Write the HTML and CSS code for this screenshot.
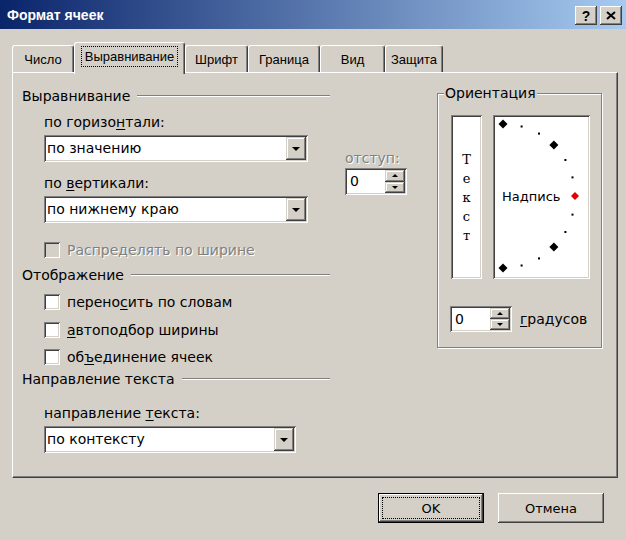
FILE: index.html
```html
<!DOCTYPE html>
<html lang="ru">
<head>
<meta charset="utf-8">
<title>Формат ячеек</title>
<link rel="stylesheet" href="styles.css">
</head>
<body>
<div class="win">
  <div class="title">
    <span class="title-text">Формат ячеек</span>
    <div class="tbtns">
      <span class="tbtn">?</span>
      <span class="tbtn"><svg width="10" height="9" viewBox="0 0 10 9"><path d="M1 1 L9 8 M9 1 L1 8" stroke="#000" stroke-width="2"/></svg></span>
    </div>
  </div>

  <div class="tabs">
    <div class="tab t1">Число</div>
    <div class="tab active t2"><span class="focus">Выравнивание</span></div>
    <div class="tab t3">Шрифт</div>
    <div class="tab t4">Граница</div>
    <div class="tab t5">Вид</div>
    <div class="tab t6">Защита</div>
  </div>

  <div class="panel">
    <div class="left">
      <div class="hdr"><span>Выравнивание</span><span class="rule"></span></div>
      <div class="indent">
        <div class="lbl m10">по горизо<u>н</u>тали:</div>
        <div class="combo m5"><span class="cval">по значению</span><span class="cbtn"><span class="down"></span></span></div>
        <div class="lbl m13">по <u>в</u>ертикали:</div>
        <div class="combo m5"><span class="cval">по нижнему краю</span><span class="cbtn"><span class="down"></span></span></div>
        <div class="chk dis m19"><span class="box"></span><span>Распределять по ширине</span></div>
      </div>
      <div class="hdr m9"><span>Отображение</span><span class="rule"></span></div>
      <div class="indent">
        <div class="chk m11"><span class="box"></span><span>перено<u>с</u>ить по словам</span></div>
        <div class="chk m12"><span class="box"></span><span><u>а</u>втоподбор ширины</span></div>
        <div class="chk m11"><span class="box"></span><span>об<u>ъ</u>единение ячеек</span></div>
      </div>
      <div class="hdr m6"><span>Направление текста</span><span class="rule"></span></div>
      <div class="indent">
        <div class="lbl m18">направление <u>т</u>екста:</div>
        <div class="combo short m5"><span class="cval">по контексту</span><span class="cbtn"><span class="down"></span></span></div>
      </div>
    </div>

    <div class="mid">
      <div class="lbl distext">отступ:</div>
      <div class="spin"><span class="sval">0</span><span class="sbtns"><span class="sbtn"><span class="up"></span></span><span class="sbtn"><span class="down small"></span></span></span></div>
    </div>

    <fieldset class="orient">
      <legend>Ориентация</legend>
      <div class="orow">
        <div class="vbox"><span>Т</span><span>е</span><span>к</span><span>с</span><span>т</span></div>
        <div class="dial">
          <svg width="93" height="160" viewBox="0 0 93 160">
            <g fill="#000">
              <polygon points="8,2.5 12.5,7 8,11.5 3.5,7"/>
              <polygon points="58.9,23.6 63.4,28.1 58.9,32.6 54.4,28.1"/>
              <polygon points="58.9,125.4 63.4,129.9 58.9,134.4 54.4,129.9"/>
              <polygon points="8,146.5 12.5,151 8,155.5 3.5,151"/>
              <rect x="25.6" y="8.5" width="2" height="2"/>
              <rect x="43" y="15.6" width="2" height="2"/>
              <rect x="69.4" y="42" width="2" height="2"/>
              <rect x="76.5" y="59.4" width="2" height="2"/>
              <rect x="76.5" y="96.6" width="2" height="2"/>
              <rect x="69.4" y="114" width="2" height="2"/>
              <rect x="43" y="140.4" width="2" height="2"/>
              <rect x="25.6" y="147.5" width="2" height="2"/>
            </g>
            <polygon points="80,75 84,79 80,83 76,79" fill="#e00000"/>
            <text x="7" y="84" class="dialtext">Надпись</text>
          </svg>
        </div>
      </div>
      <div class="srow">
        <div class="spin"><span class="sval">0</span><span class="sbtns"><span class="sbtn"><span class="up"></span></span><span class="sbtn"><span class="down small"></span></span></span></div>
        <span><u>г</u>радусов</span>
      </div>
    </fieldset>
  </div>

  <div class="btns">
    <div class="btn def"><span class="bfocus">OK</span></div>
    <div class="btn"><span class="bfocus nofocus">Отмена</span></div>
  </div>
</div>
</body>
</html>
```

FILE: styles.css
```css
* { box-sizing: border-box; }
html, body { margin: 0; padding: 0; }
body {
  width: 626px;
  height: 540px;
  overflow: hidden;
  font-family: "DejaVu Sans", "Liberation Sans", Arial, sans-serif;
  font-size: 14px;
  color: #000;
  background: #d4d0c8;
}
u { text-decoration: underline; text-underline-offset: 2px; }

.win {
  width: 626px;
  height: 540px;
  background: #d4d0c8;
  display: flex;
  flex-direction: column;
}

/* title bar */
.title {
  height: 29px;
  flex: none;
  background: linear-gradient(to right, #0a246a, #a6caf0);
  display: flex;
  align-items: center;
  padding: 0 4px 0 7px;
  font-family: "Liberation Sans", Arial, sans-serif;
}
.title-text {
  flex: 1;
  color: #fff;
  font-weight: bold;
  font-size: 14px;
}
.tbtns { display: flex; gap: 3px; margin-top: 2px; }
.tbtn {
  width: 22px;
  height: 19px;
  background: #d4d0c8;
  box-shadow: inset -1px -1px #404040, inset 1px 1px #fff, inset -2px -2px #808080;
  display: flex;
  align-items: center;
  justify-content: center;
  font-weight: bold;
  font-size: 14px;
  line-height: 1;
}

/* tabs */
.tabs {
  display: flex;
  align-items: flex-end;
  height: 30px;
  flex: none;
  margin: 13px 0 0 12px;
  position: relative;
  z-index: 1;
  font-family: "Liberation Sans", Arial, sans-serif;
  font-size: 13px;
}
.tab {
  height: 27px;
  background: #d4d0c8;
  border-top: 1px solid #fff;
  border-left: 1px solid #fff;
  border-right: 1px solid #404040;
  box-shadow: inset -1px 0 #808080;
  border-radius: 3px 3px 0 0;
  display: flex;
  align-items: center;
  justify-content: center;
  padding-top: 1px;
}
.t1 { width: 62px; }
.t2 { width: 111px; }
.t3 { width: 63px; }
.t4 { width: 72px; }
.t5 { width: 65px; }
.t6 { width: 58px; }
.tab.active {
  height: 32px;
  margin-bottom: -2px;
  padding-bottom: 4px;
  padding-top: 0;
}
.focus {
  outline: 1px dotted #000;
  padding: 2px 3px;
}

/* panel */
.panel {
  flex: none;
  height: 406px;
  margin: 0 8px 0 12px;
  border-top: 1px solid #fff;
  border-left: 1px solid #fff;
  border-right: 1px solid #404040;
  border-bottom: 1px solid #404040;
  box-shadow: inset -1px -1px #808080;
  display: flex;
  align-items: flex-start;
  padding: 15px 0 0 9px;
}
.left { width: 308px; display: flex; flex-direction: column; }
.hdr { display: flex; align-items: center; height: 16px; line-height: 16px; white-space: nowrap; }
.rule {
  flex: 1;
  height: 2px;
  border-top: 1px solid #808080;
  border-bottom: 1px solid #fff;
  margin-left: 7px;
}
.indent { padding-left: 22px; display: flex; flex-direction: column; }
.lbl { height: 16px; line-height: 16px; white-space: nowrap; }

.m5 { margin-top: 5px; }
.m6 { margin-top: 6px; }
.m9 { margin-top: 9px; }
.m10 { margin-top: 10px; }
.m11 { margin-top: 11px; }
.m12 { margin-top: 12px; }
.m13 { margin-top: 13px; }
.m18 { margin-top: 18px; }
.m19 { margin-top: 19px; }

.combo {
  width: 264px;
  height: 27px;
  background: #fff;
  box-shadow: inset 1px 1px #808080, inset -1px -1px #fff, inset 2px 2px #404040, inset -2px -2px #d4d0c8;
  padding: 2px;
  display: flex;
}
.combo.short { width: 252px; }
.cval { flex: 1; line-height: 23px; padding-left: 1px; }
.cbtn {
  width: 20px;
  background: #d4d0c8;
  box-shadow: inset -1px -1px #404040, inset 1px 1px #d4d0c8, inset -2px -2px #808080, inset 2px 2px #fff;
  display: flex;
  align-items: center;
  justify-content: center;
}
.down {
  width: 0;
  height: 0;
  border-left: 4px solid transparent;
  border-right: 4px solid transparent;
  border-top: 4px solid #000;
}
.down.small {
  border-left-width: 3px;
  border-right-width: 3px;
  border-top-width: 3px;
}
.up {
  width: 0;
  height: 0;
  border-left: 3px solid transparent;
  border-right: 3px solid transparent;
  border-bottom: 3px solid #000;
}

.chk { display: flex; align-items: center; height: 16px; gap: 7px; white-space: nowrap; }
.box {
  width: 16px;
  height: 16px;
  flex: none;
  background: #fff;
  box-shadow: inset 1px 1px #808080, inset -1px -1px #fff, inset 2px 2px #404040, inset -2px -2px #d4d0c8;
}
.chk.dis .box { background: #d4d0c8; }
.chk.dis, .distext { color: #808080; text-shadow: 1px 1px #fff; }

/* middle */
.mid { width: 92px; margin-left: 15px; display: flex; flex-direction: column; padding-top: 62px; }
.spin {
  width: 62px;
  height: 27px;
  background: #fff;
  box-shadow: inset 1px 1px #808080, inset -1px -1px #fff, inset 2px 2px #404040, inset -2px -2px #d4d0c8;
  padding: 2px;
  display: flex;
  margin-top: 2px;
}
.sval { flex: 1; line-height: 23px; padding-left: 3px; }
.sbtns { width: 20px; display: flex; flex-direction: column; }
.sbtn {
  flex: 1;
  background: #d4d0c8;
  box-shadow: inset -1px -1px #404040, inset 1px 1px #d4d0c8, inset -2px -2px #808080, inset 2px 2px #fff;
  display: flex;
  align-items: center;
  justify-content: center;
}

/* orientation */
.orient {
  margin: -3px 0 0 0;
  width: 165px;
  min-width: 0;
  padding: 0 0 15px 0;
  border: 1px solid #808080;
  box-shadow: inset 1px 1px #fff, 1px 1px #fff;
}
.orient legend {
  margin-left: 6px;
  padding: 0 1px;
  line-height: 16px;
  height: 16px;
  background: #d4d0c8;
}
.orow { display: flex; gap: 11px; margin: 14px 0 0 13px; }
.vbox {
  width: 31px;
  height: 164px;
  background: #fff;
  box-shadow: inset 1px 1px #808080, inset -1px -1px #fff, inset 2px 2px #404040, inset -2px -2px #d4d0c8;
  display: flex;
  flex-direction: column;
  align-items: center;
  justify-content: center;
  line-height: 19px;
  font-family: "DejaVu Serif", "Liberation Serif", serif;
  font-size: 13px;
}
.dial {
  width: 97px;
  height: 164px;
  background: #fff;
  box-shadow: inset 1px 1px #808080, inset -1px -1px #fff, inset 2px 2px #404040, inset -2px -2px #d4d0c8;
  padding: 2px;
}
.dial svg { display: block; }
.dialtext { font-family: "DejaVu Sans", "Liberation Sans", Arial, sans-serif; font-size: 13px; fill: #000; }
.srow { display: flex; align-items: center; gap: 8px; margin: 27px 0 0 12px; white-space: nowrap; }
.srow .spin { height: 26px; margin-top: 0; }
.srow .spin .sval { line-height: 22px; }

/* buttons */
.btns { display: flex; justify-content: flex-end; gap: 14px; margin: 15px 22px 0 0; }
.btn {
  width: 106px;
  height: 30px;
  background: #d4d0c8;
  box-shadow: inset -1px -1px #404040, inset 1px 1px #fff, inset -2px -2px #808080, inset 2px 2px #d4d0c8;
  display: flex;
  padding: 4px;
  font-size: 13px;
}
.btn.def {
  border: 1px solid #000;
  padding: 3px;
}
.bfocus {
  flex: 1;
  display: flex;
  align-items: center;
  justify-content: center;
  border: 1px dotted #000;
}
.bfocus.nofocus { border-color: transparent; }
```
